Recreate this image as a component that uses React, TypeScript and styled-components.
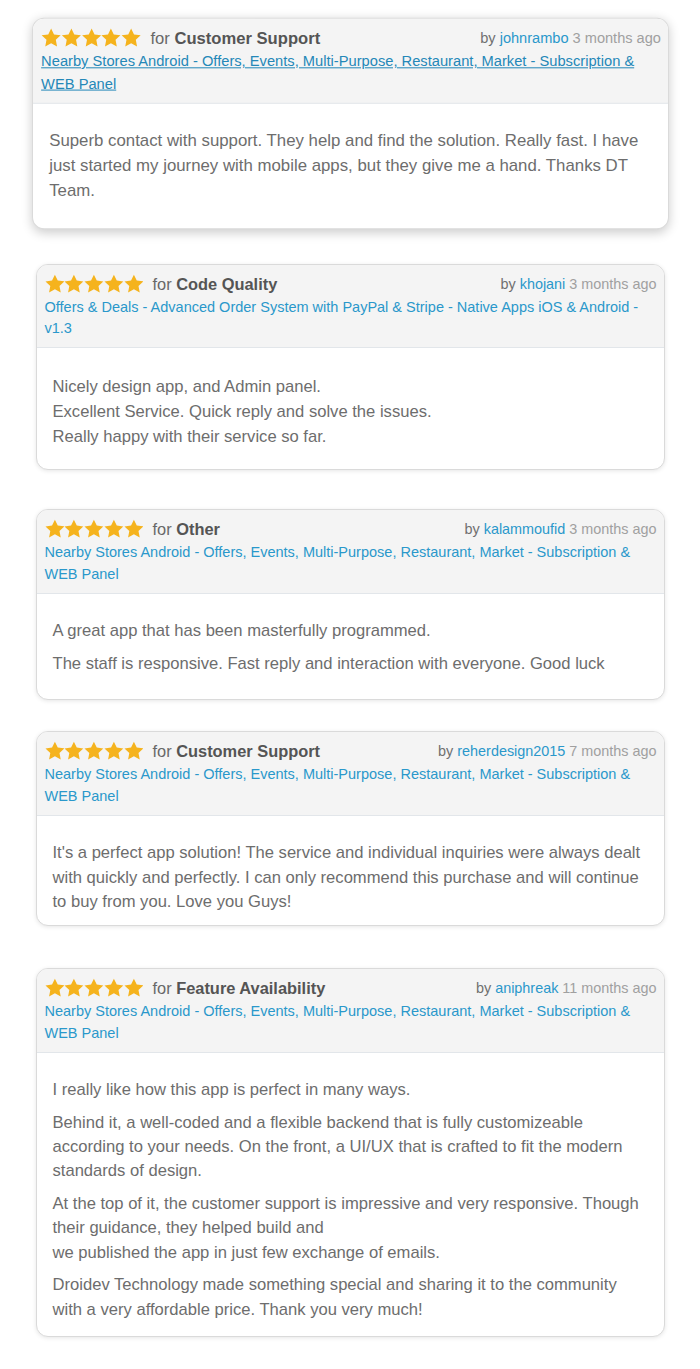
import React from "react";
import styled, { createGlobalStyle, css } from "styled-components";

const GlobalStyle = createGlobalStyle`
  html, body {
    margin: 0;
    padding: 0;
    background: #ffffff;
  }
  body {
    font-family: "Liberation Sans", Arial, Helvetica, sans-serif;
    -webkit-font-smoothing: antialiased;
  }
`;

const Page = styled.div`
  width: 700px;
  padding: 19px 0 40px;
  box-sizing: border-box;
  display: flex;
  flex-direction: column;
  align-items: center;
`;

const Card = styled.article<{ $active?: boolean; $gap: number }>`
  width: 629px;
  box-sizing: border-box;
  margin-top: ${(p) => p.$gap}px;
  border: 1px solid #dadada;
  border-radius: 12px;
  background: #ffffff;
  overflow: hidden;
  box-shadow: 0 1px 4px rgba(0, 0, 0, 0.1);
  ${(p) =>
    p.$active &&
    css`
      transform: scale(1.0127);
      box-shadow: 0 3px 11px rgba(0, 0, 0, 0.2);
    `}
`;

const Header = styled.header`
  background: #f4f4f4;
  border-bottom: 1px solid #e2e6ea;
  padding: 8px 7px 7.5px 8px;
`;

const TopRow = styled.div`
  display: flex;
  align-items: center;
  justify-content: space-between;
  height: 22px;
`;

const RatingGroup = styled.div`
  display: flex;
  align-items: center;
`;

const Stars = styled.div`
  display: flex;
  margin-right: 9px;
`;

const Category = styled.span`
  font-size: 16.4px;
  color: #686868;
  line-height: 22px;
  b {
    font-weight: 700;
    color: #555555;
  }
`;

const Meta = styled.span`
  font-size: 14.4px;
  color: #a0a0a0;
  line-height: 22px;
`;

const By = styled.span`
  color: #707070;
`;

const User = styled.a`
  color: #2a98cb;
  text-decoration: none;
`;

const ItemLink = styled.a<{ $underline?: boolean }>`
  display: block;
  margin-top: 2px;
  font-size: 14.5px;
  line-height: 21.6px;
  color: ${(p) => (p.$underline ? "#2488b8" : "#2a98cb")};
  text-decoration: ${(p) => (p.$underline ? "underline" : "none")};
`;

const Body = styled.div<{ $bottom: number; $lh: number }>`
  padding: 25.5px 16px ${(p) => p.$bottom}px;
  font-size: 16.6px;
  line-height: ${(p) => p.$lh}px;
  color: #6d6d6d;
`;

const Para = styled.p`
  margin: 0 0 8.6px;
  &:last-child {
    margin-bottom: 0;
  }
`;

const Star = () => (
  <svg width="19.8" height="19.8" viewBox="0 0 24 24" aria-hidden="true">
    <path
      d="M12 0.8l3.45 7.2 7.95.98-5.83 5.45 1.5 7.87L12 18.45l-7.07 3.85 1.5-7.87L0.6 8.98l7.95-.98z"
      fill="#f5b31d"
    />
  </svg>
);

type Review = {
  category: string;
  user: string;
  time: string;
  item: string;
  paragraphs: React.ReactNode[];
  active?: boolean;
  gap: number;
  bottom: number;
  lh?: number;
};

const reviews: Review[] = [
  {
    category: "Customer Support",
    user: "johnrambo",
    time: "3 months ago",
    item: "Nearby Stores Android - Offers, Events, Multi-Purpose, Restaurant, Market - Subscription & WEB Panel",
    paragraphs: [
      "Superb contact with support. They help and find the solution. Really fast. I have just started my journey with mobile apps, but they give me a hand. Thanks DT Team.",
    ],
    active: true,
    gap: 0,
    bottom: 25,
  },
  {
    category: "Code Quality",
    user: "khojani",
    time: "3 months ago",
    item: "Offers & Deals - Advanced Order System with PayPal & Stripe - Native Apps iOS & Android - v1.3",
    paragraphs: [
      <>
        Nicely design app, and Admin panel.
        <br />
        Excellent Service. Quick reply and solve the issues.
        <br />
        Really happy with their service so far.
      </>,
    ],
    gap: 36,
    bottom: 20,
    lh: 25,
  },
  {
    category: "Other",
    user: "kalammoufid",
    time: "3 months ago",
    item: "Nearby Stores Android - Offers, Events, Multi-Purpose, Restaurant, Market - Subscription & WEB Panel",
    paragraphs: [
      "A great app that has been masterfully programmed.",
      "The staff is responsive. Fast reply and interaction with everyone. Good luck",
    ],
    gap: 39,
    bottom: 23,
  },
  {
    category: "Customer Support",
    user: "reherdesign2015",
    time: "7 months ago",
    item: "Nearby Stores Android - Offers, Events, Multi-Purpose, Restaurant, Market - Subscription & WEB Panel",
    paragraphs: [
      "It's a perfect app solution! The service and individual inquiries were always dealt with quickly and perfectly. I can only recommend this purchase and will continue to buy from you. Love you Guys!",
    ],
    gap: 31,
    bottom: 11,
  },
  {
    category: "Feature Availability",
    user: "aniphreak",
    time: "11 months ago",
    item: "Nearby Stores Android - Offers, Events, Multi-Purpose, Restaurant, Market - Subscription & WEB Panel",
    paragraphs: [
      "I really like how this app is perfect in many ways.",
      "Behind it, a well-coded and a flexible backend that is fully customizeable according to your needs. On the front, a UI/UX that is crafted to fit the modern standards of design.",
      <>
        At the top of it, the customer support is impressive and very responsive. Though their guidance, they helped build and
        <br />
        we published the app in just few exchange of emails.
      </>,
      "Droidev Technology made something special and sharing it to the community with a very affordable price. Thank you very much!",
    ],
    gap: 42,
    bottom: 14,
  },
];

const ReviewCard = ({ r }: { r: Review }) => (
  <Card $active={r.active} $gap={r.gap}>
    <Header>
      <TopRow>
        <RatingGroup>
          <Stars>
            {[0, 1, 2, 3, 4].map((i) => (
              <Star key={i} />
            ))}
          </Stars>
          <Category>
            for <b>{r.category}</b>
          </Category>
        </RatingGroup>
        <Meta>
          <By>by</By> <User href="#">{r.user}</User> {r.time}
        </Meta>
      </TopRow>
      <ItemLink href="#" $underline={r.active}>
        {r.item}
      </ItemLink>
    </Header>
    <Body $bottom={r.bottom} $lh={r.lh ?? 24.2}>
      {r.paragraphs.map((p, i) => (
        <Para key={i}>{p}</Para>
      ))}
    </Body>
  </Card>
);

export default function App() {
  return (
    <>
      <GlobalStyle />
      <Page>
        {reviews.map((r) => (
          <ReviewCard key={r.user} r={r} />
        ))}
      </Page>
    </>
  );
}
